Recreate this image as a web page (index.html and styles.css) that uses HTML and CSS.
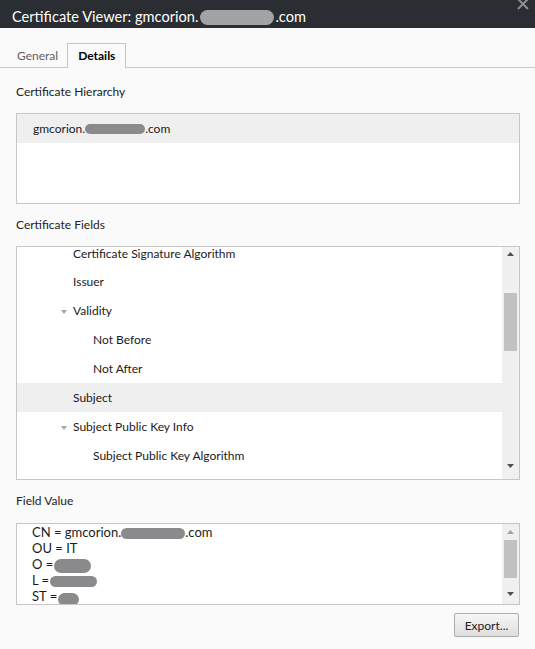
FILE: index.html
```html
<!DOCTYPE html>
<html>
<head>
<meta charset="utf-8">
<link rel="stylesheet" href="styles.css">
</head>
<body>
<div class="window">
  <header class="titlebar">
    <span class="title">Certificate Viewer: gmcorion.<span class="redact r-title"></span>.com</span>
    <svg class="close" width="12" height="12" viewBox="0 0 12 12"><path d="M1 1 L11 11 M11 1 L1 11" stroke="#8b8e92" stroke-width="2" fill="none"/></svg>
  </header>
  <nav class="tabs">
    <span class="tab general">General</span>
    <span class="tab active">Details</span>
  </nav>
  <main class="content">
    <div class="label first">Certificate Hierarchy</div>
    <div class="box hierarchy">
      <div class="hrow selected">gmcorion.<span class="redact r-hier"></span>.com</div>
    </div>

    <div class="label">Certificate Fields</div>
    <div class="box fields">
      <div class="tree">
        <div class="trow l1 partial"><span class="ptext">Certificate Signature Algorithm</span></div>
        <div class="trow l1">Issuer</div>
        <div class="trow l1 toggle"><svg class="tri" width="6" height="4" viewBox="0 0 6 4"><path d="M0 0 L6 0 L3 4Z" fill="#a6a6a6"/></svg>Validity</div>
        <div class="trow l2">Not Before</div>
        <div class="trow l2">Not After</div>
        <div class="trow l1 selected">Subject</div>
        <div class="trow l1 toggle"><svg class="tri" width="6" height="4" viewBox="0 0 6 4"><path d="M0 0 L6 0 L3 4Z" fill="#a6a6a6"/></svg>Subject Public Key Info</div>
        <div class="trow l2">Subject Public Key Algorithm</div>
      </div>
      <div class="scrollbar">
        <div class="sb-btn up-a"><svg width="7" height="4" viewBox="0 0 7 4"><path d="M0 4 L3.5 0 L7 4Z" fill="#505050"/></svg></div>
        <div class="sb-track"><div class="thumb thumb-a"></div></div>
        <div class="sb-btn down-a"><svg width="7" height="4" viewBox="0 0 7 4"><path d="M0 0 L7 0 L3.5 4Z" fill="#505050"/></svg></div>
      </div>
    </div>

    <div class="label">Field Value</div>
    <div class="box value">
      <div class="value-text">
        <div class="vline">CN = gmcorion.<span class="redact r-cn"></span>.com</div>
        <div class="vline">OU = IT</div>
        <div class="vline">O =<span class="redact r-o"></span></div>
        <div class="vline">L =<span class="redact r-l"></span></div>
        <div class="vline">ST =<span class="redact r-st"></span></div>
      </div>
      <div class="scrollbar">
        <div class="sb-btn up-b"><svg width="7" height="4" viewBox="0 0 7 4"><path d="M0 4 L3.5 0 L7 4Z" fill="#a3a3a3"/></svg></div>
        <div class="sb-track"><div class="thumb thumb-b"></div></div>
        <div class="sb-btn down-b"><svg width="7" height="4" viewBox="0 0 7 4"><path d="M0 0 L7 0 L3.5 4Z" fill="#505050"/></svg></div>
      </div>
    </div>

    <div class="actions">
      <button class="export">Export...</button>
    </div>
  </main>
</div>
</body>
</html>
```

FILE: styles.css
```css
html, body {
  margin: 0;
  padding: 0;
  background: #fafafa;
}
body {
  font-family: Lato, "Open Sans", sans-serif;
  font-size: 12px;
  color: #1b1b1b;
  width: 535px;
  height: 649px;
  overflow: hidden;
}
.window {
  display: flex;
  flex-direction: column;
}
.titlebar {
  height: 28px;
  background: #2a2d31;
  display: flex;
  box-sizing: border-box;
  padding: 0 6px 0 12px;
}
.title {
  color: #ffffff;
  font-size: 14.6px;
  line-height: 20px;
  margin-top: 7px;
  white-space: nowrap;
}
.close {
  margin-left: auto;
  margin-top: -2px;
}
.redact {
  display: inline-block;
  background: #8a8a8c;
  border-radius: 8px;
  vertical-align: middle;
  filter: blur(0.4px);
}
.r-title {
  width: 74px;
  height: 15px;
  background: #a2a3a5;
  margin: -2px 1px 0 2px;
}
.r-hier {
  width: 60px;
  height: 10px;
}
.r-cn {
  width: 64px;
  height: 11px;
}
.r-o {
  width: 37px;
  height: 14px;
  margin-left: 1px;
}
.r-l {
  width: 47px;
  height: 11px;
  margin-left: 1px;
}
.r-st {
  width: 21px;
  height: 13px;
  margin-left: 1px;
  margin-top: 3px;
}
.tabs {
  display: flex;
  padding: 15px 0 0 6px;
  border-bottom: 1px solid #c9c9c9;
  height: 24px;
}
.tab {
  height: 24px;
  line-height: 23px;
  padding: 0 10px;
  border: 1px solid transparent;
  border-bottom: none;
  color: #5f5f5f;
}
.tab.general {
  padding-right: 8px;
}
.tab.active {
  border-color: #c6c6c6;
  background: #fafafa;
  color: #000;
  font-weight: bold;
  position: relative;
  z-index: 1;
}
.content {
  display: flex;
  flex-direction: column;
  padding: 0 15px 0 16px;
}
.label {
  line-height: 16px;
  margin-top: 13px;
  color: #222;
}
.label.first {
  margin-top: 16px;
}
.box {
  margin-top: 13px;
  border: 1px solid #c6c6c6;
  background: #fff;
  box-sizing: border-box;
}
.hierarchy {
  height: 91px;
}
.hrow {
  height: 29px;
  display: flex;
  align-items: center;
  padding-left: 16px;
  box-sizing: border-box;
  white-space: nowrap;
}
.selected {
  background: #efefef;
}
.fields {
  height: 234px;
  display: flex;
}
.tree {
  flex: 1;
}
.trow {
  height: 29px;
  display: flex;
  align-items: center;
  white-space: nowrap;
}
.trow.partial {
  height: 20px;
  align-items: flex-start;
}
.ptext {
  line-height: 13px;
}
.trow.l1 {
  padding-left: 56px;
}
.trow.l2 {
  padding-left: 76px;
}
.trow.toggle {
  padding-left: 44px;
}
.tri {
  margin-right: 6px;
  margin-top: 2px;
}
.scrollbar {
  width: 17px;
  background: #f0f0f0;
  display: flex;
  flex-direction: column;
  flex-shrink: 0;
}
.sb-btn {
  height: 17px;
  display: flex;
  justify-content: center;
  align-items: flex-start;
  flex-shrink: 0;
}
.sb-btn svg {
  display: block;
}
.up-a { padding-top: 5px; height: 12px; }
.down-a { padding-top: 2px; height: 15px; }
.up-b { padding-top: 6px; height: 10px; }
.down-b { padding-top: 5px; height: 12px; }
.sb-track {
  flex: 1;
}
.thumb {
  width: 13px;
  margin-left: 2px;
  background: #c1c1c1;
}
.thumb-a {
  margin-top: 29px;
  height: 58px;
}
.thumb-b {
  margin-top: 0;
  height: 38px;
}
.value {
  margin-top: 14px;
  height: 82px;
  display: flex;
}
.value-text {
  flex: 1;
  padding-left: 15px;
  overflow: hidden;
  font-size: 13px;
}
.vline {
  height: 16px;
  line-height: 16px;
  white-space: nowrap;
}
.actions {
  display: flex;
  justify-content: flex-end;
  margin-top: 8px;
  padding-right: 1px;
}
.export {
  width: 65px;
  height: 24px;
  font-family: Lato, "Open Sans", sans-serif;
  font-size: 12px;
  color: #222;
  border: 1px solid #adadad;
  border-radius: 2px;
  background: linear-gradient(#f6f6f6, #dedede);
  padding: 0;
}
```
